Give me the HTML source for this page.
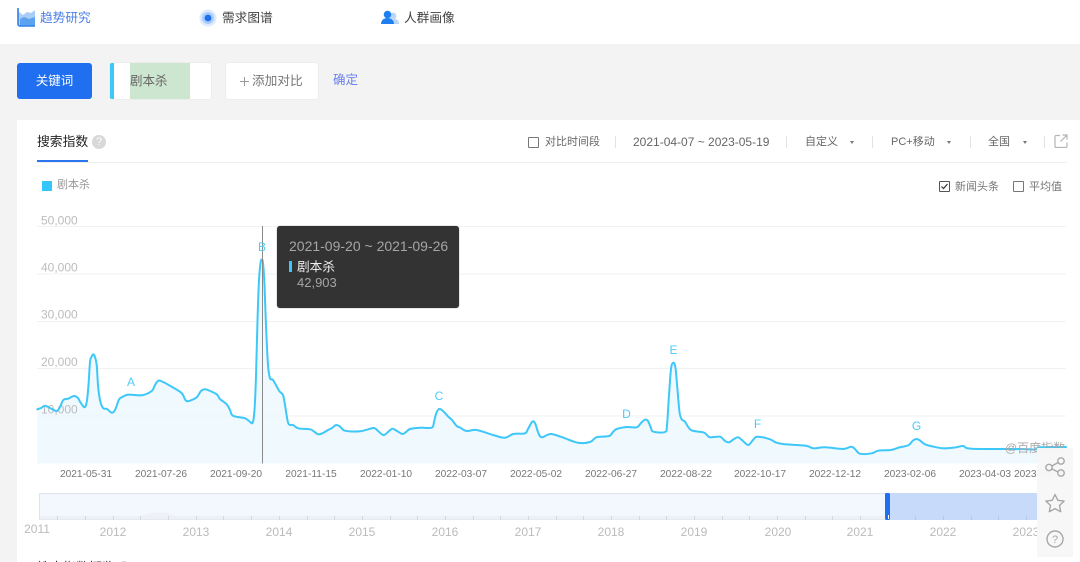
<!DOCTYPE html>
<html lang="zh"><head><meta charset="utf-8"><title>搜索指数</title>
<style>
html,body{margin:0;padding:0;background:#fff}
#p{position:relative;width:1080px;height:562px;overflow:hidden;background:#f3f3f3;font-family:"Liberation Sans","Noto Sans CJK SC",sans-serif;filter:blur(.35px)}
#p div{position:absolute;white-space:nowrap}
.t{line-height:16px;height:16px}
.sep{width:1px;height:12px;top:136px;background:#e3e3e3}
.cb{width:9px;height:9px;border:1px solid #777;background:#fff;border-radius:1px}
.arr{width:0;height:0;border-left:2px solid transparent;border-right:2px solid transparent;border-top:3px solid #777;top:141px}
.g{font-size:12px;color:#666}
</style></head><body><div id="p">
<div style="left:0;top:0;width:1080px;height:44px;background:#fff"></div>
<svg style="position:absolute;left:17px;top:7px" width="20" height="21" viewBox="0 0 20 21"><path d="M1 1v16a2 2 0 0 0 2 2h15V3l-4 3-4-1-4 3-4-3z" fill="#a9cdf6"/><path d="M3 12l4-2 5 2 6-2v9H3z" fill="#5ba2ef"/><path d="M1 1v16a2 2 0 0 0 2 2h15" fill="none" stroke="#2f80ed" stroke-width="1.6"/></svg>
<div class="t" style="left:40px;top:10px;font-size:12.7px;color:#4a7fe8">趋势研究</div>
<svg style="position:absolute;left:199px;top:9px" width="18" height="18"><circle cx="9" cy="9" r="8.5" fill="#dceafc"/><circle cx="9" cy="9" r="6" fill="#a9cdf8"/><circle cx="9" cy="9" r="3.4" fill="#1f6ff0"/></svg>
<div class="t" style="left:222px;top:10px;font-size:12.7px;color:#444">需求图谱</div>
<svg style="position:absolute;left:380px;top:9px" width="20" height="18"><circle cx="13" cy="7" r="3.4" fill="#b9d6f8"/><path d="M11 15c0-3 2-5 4-5s4 2 4 5z" fill="#b9d6f8"/><circle cx="7.5" cy="5.5" r="3.8" fill="#1f7ff0"/><path d="M1 15c0-4 3-6 6.500-6S14 11 14 15z" fill="#1f7ff0"/></svg>
<div class="t" style="left:404px;top:10px;font-size:12.7px;color:#444">人群画像</div>

<div style="left:17px;top:63px;width:75px;height:36px;background:#1f6ff0;border-radius:3px;color:#fff;font-size:12.5px;line-height:36px;text-align:center">关键词</div>
<div style="left:110px;top:63px;width:101px;height:36px;background:#fff;border-radius:2px;box-shadow:0 0 1px #ccc"></div>
<div style="left:110px;top:63px;width:4px;height:36px;background:#3ec7f9;border-radius:2px 0 0 2px"></div>
<div style="left:130px;top:63px;width:60px;height:36px;background:#cde6d0;font-size:12.5px;line-height:36px;color:#666">剧本杀</div>
<div style="left:226px;top:63px;width:92px;height:36px;background:#fff;border-radius:2px;box-shadow:0 0 1px #ccc"></div>
<svg style="position:absolute;left:240px;top:77px" width="9" height="9"><path d="M0 4.500H9M4.500 0V9" stroke="#999" stroke-width="1"/></svg>
<div style="left:252px;top:63px;height:36px;font-size:12.7px;line-height:36px;color:#777">添加对比</div>
<div class="t" style="left:333px;top:72px;font-size:12.5px;color:#6a80ee">确定</div>

<div style="left:17px;top:120px;width:1063px;height:442px;background:#fff"></div>
<div class="t" style="left:37px;top:134px;font-size:12.8px;color:#222">搜索指数</div>
<div style="left:92px;top:135px;width:14px;height:14px;border-radius:50%;background:#d8d8d8;color:#fff;font-size:11px;line-height:14px;text-align:center">?</div>
<div style="left:37px;top:162px;width:1030px;height:1px;background:#efefef"></div>
<div style="left:37px;top:160px;width:51px;height:2px;background:#2b76ef"></div>

<div class="cb" style="left:528px;top:137px"></div>
<div class="t g" style="left:545px;top:134px;font-size:11px">对比时间段</div>
<div class="sep" style="left:615px"></div>
<div class="t g" style="left:633px;top:134px">2021-04-07 ~ 2023-05-19</div>
<div class="sep" style="left:786px"></div>
<div class="t g" style="left:805px;top:134px;font-size:11px">自定义</div>
<div class="arr" style="left:850px"></div>
<div class="sep" style="left:872px"></div>
<div class="t g" style="left:891px;top:134px;font-size:11px">PC+移动</div>
<div class="arr" style="left:947px"></div>
<div class="sep" style="left:970px"></div>
<div class="t g" style="left:988px;top:134px;font-size:11px">全国</div>
<div class="arr" style="left:1023px"></div>
<div class="sep" style="left:1044px"></div>
<svg style="position:absolute;left:1054px;top:134px" width="14" height="14" fill="none" stroke="#b5b5b5" stroke-width="1.200"><path d="M6 1.500H2a1 1 0 0 0-1 1v10a1 1 0 0 0 1 1h10a1 1 0 0 0 1-1V8.500"/><path d="M6.500 7.500l6.500-6.500M8.500 1h4.500v4.500"/></svg>

<div style="left:42px;top:181px;width:10px;height:10px;background:#34c5fa"></div>
<div class="t" style="left:57px;top:177px;font-size:11px;color:#999">剧本杀</div>
<div class="cb" style="left:939px;top:181px;border-color:#555"></div>
<svg style="position:absolute;left:940px;top:182px" width="9" height="9"><path d="M1.500 4.500l2 2 4-4.500" fill="none" stroke="#333" stroke-width="1.200"/></svg>
<div class="t" style="left:955px;top:179px;font-size:11px;color:#777">新闻头条</div>
<div class="cb" style="left:1013px;top:181px"></div>
<div class="t" style="left:1029px;top:179px;font-size:11px;color:#777">平均值</div>

<svg style="position:absolute;left:0;top:0" width="1080" height="562">
<g stroke="#f2f2f2" stroke-width="1"><path d="M37 226.500H1066M37 274H1066M37 321.500H1066M37 368.500H1066M37 416H1066"/></g>
<path id="ar" fill="#e9f7fd" fill-opacity=".75" d="M37.300 409.300L41 408 45 405.700 50 408 56.700 411 60 407 63.300 400 68 398.700 74 396 78 398 80 401.700 84 407 86 405 87.300 398 88.500 385 90 362 91.500 357 93.300 354.300 95 357 96.700 365 98 385 100 400 103 408 107 409 111.700 412.700 115 410 118 402 120 398.300 128 394.700 141.700 395.300 151.700 391 155 385 158.300 380.700 162 381.500 170 385.700 180 391.700 183 395 186 400.700 190 400.700 196.700 397.300 201 391 205 389.300 209 390.500 216.700 394.300 220 399 226.700 404.300 230 410 233 415.700 245 418.300 249 421 252.700 422.700 254.500 410 256 376 257.500 320 259 280 260.500 263 261.700 259.500 263 263 264.500 285 266 325 268 365 270 378.300 273 380 279.300 391 283 395 285 405 288.300 423.300 293 425 298.300 428.300 310 429.300 314 431.500 318.300 434.300 323 433 328 430 332 428 336 425 340 426.500 345 430.700 360 431.300 373.300 428 377 430 383.300 435 388 432 392.300 428.700 397 431 402.300 434 406 432 410 429 420 427.700 431.700 427.700 434 422 436 414 439 409 443 411 448.300 416.700 452 420 456.700 426 460 427.500 466.700 431 476.700 430 493 435 505 437.700 513.300 434 525 433.300 528 429 532.300 421.700 535 423 538 432 541.700 437.300 551 434 565 438.300 572 441 580 443 590 442 594 439 597.300 437 609 436 613 432 616.700 429 626.700 427 636.700 427.300 641 423 645 419.700 648 421 651 428 653.300 431.700 665 432 667 425 669 395 671 369 673.300 362.700 675.500 368 677.500 390 679.500 412 681.700 419.300 685 421.700 691 430 703.300 432.300 707 435 710 437.300 720 436.700 725 441 729 442.300 734 439 738.300 437.300 743 441 748.300 445 753 440 757.300 436.700 770 439.300 776 442.500 785 444.300 806 445.700 813.300 448.300 825 447.300 843.300 449 851 446.700 855 449 860 453.700 871.700 453.300 878.300 450.700 890.700 450 899 447.500 908.300 445.300 913 440.500 916.700 439 920 440.500 925 444.300 933 446.500 943.300 448.300 955 447.500 963.300 446 971.700 448.700 1020 449 1035 449.500 1040 447.300 1066 447V463.500H37.300Z"/>
<g font-family="Liberation Sans,sans-serif" font-size="12" fill="#bcbcbc">
<text x="41" y="224.500">50,000</text><text x="41" y="271.500">40,000</text><text x="41" y="318.500">30,000</text><text x="41" y="366">20,000</text><text x="41" y="413.500">10,000</text></g>
<path id="ln" fill="none" stroke="#3ec7f9" stroke-width="2" stroke-linejoin="round" stroke-linecap="round" d="M37.300 409.300L41 408 45 405.700 50 408 56.700 411 60 407 63.300 400 68 398.700 74 396 78 398 80 401.700 84 407 86 405 87.300 398 88.500 385 90 362 91.500 357 93.300 354.300 95 357 96.700 365 98 385 100 400 103 408 107 409 111.700 412.700 115 410 118 402 120 398.300 128 394.700 141.700 395.300 151.700 391 155 385 158.300 380.700 162 381.500 170 385.700 180 391.700 183 395 186 400.700 190 400.700 196.700 397.300 201 391 205 389.300 209 390.500 216.700 394.300 220 399 226.700 404.300 230 410 233 415.700 245 418.300 249 421 252.700 422.700 254.500 410 256 376 257.500 320 259 280 260.500 263 261.700 259.500 263 263 264.500 285 266 325 268 365 270 378.300 273 380 279.300 391 283 395 285 405 288.300 423.300 293 425 298.300 428.300 310 429.300 314 431.500 318.300 434.300 323 433 328 430 332 428 336 425 340 426.500 345 430.700 360 431.300 373.300 428 377 430 383.300 435 388 432 392.300 428.700 397 431 402.300 434 406 432 410 429 420 427.700 431.700 427.700 434 422 436 414 439 409 443 411 448.300 416.700 452 420 456.700 426 460 427.500 466.700 431 476.700 430 493 435 505 437.700 513.300 434 525 433.300 528 429 532.300 421.700 535 423 538 432 541.700 437.300 551 434 565 438.300 572 441 580 443 590 442 594 439 597.300 437 609 436 613 432 616.700 429 626.700 427 636.700 427.300 641 423 645 419.700 648 421 651 428 653.300 431.700 665 432 667 425 669 395 671 369 673.300 362.700 675.500 368 677.500 390 679.500 412 681.700 419.300 685 421.700 691 430 703.300 432.300 707 435 710 437.300 720 436.700 725 441 729 442.300 734 439 738.300 437.300 743 441 748.300 445 753 440 757.300 436.700 770 439.300 776 442.500 785 444.300 806 445.700 813.300 448.300 825 447.300 843.300 449 851 446.700 855 449 860 453.700 871.700 453.300 878.300 450.700 890.700 450 899 447.500 908.300 445.300 913 440.500 916.700 439 920 440.500 925 444.300 933 446.500 943.300 448.300 955 447.500 963.300 446 971.700 448.700 1020 449 1035 449.500 1040 447.300 1066 447"/>
<path d="M262.500 226V463.500" stroke="#8a8a8a" stroke-width="1"/>
<g font-family="Liberation Sans,sans-serif" font-size="12" fill="#4dcbf8" text-anchor="middle">
<text x="131" y="386">A</text><text x="262" y="251">B</text><text x="439" y="400">C</text><text x="626.500" y="418">D</text><text x="673.500" y="354">E</text><text x="757.500" y="428">F</text><text x="916.500" y="430">G</text></g>
<g font-family="Liberation Sans,sans-serif" font-size="10.200" fill="#777" text-anchor="middle">
<text x="86" y="477">2021-05-31</text><text x="161" y="477">2021-07-26</text><text x="236" y="477">2021-09-20</text><text x="311" y="477">2021-11-15</text><text x="386" y="477">2022-01-10</text><text x="461" y="477">2022-03-07</text><text x="536" y="477">2022-05-02</text><text x="611" y="477">2022-06-27</text><text x="686" y="477">2022-08-22</text><text x="760" y="477">2022-10-17</text><text x="835" y="477">2022-12-12</text><text x="910" y="477">2023-02-06</text><text x="985" y="477">2023-04-03</text><text x="1040" y="477">2023-05-19</text></g>
<text x="1005" y="452" font-family="Liberation Sans,Noto Sans CJK SC,sans-serif" font-size="12" fill="#aaa">@百度指数</text>
<rect x="39.500" y="493.500" width="846" height="26" fill="#f3f7fe" stroke="#e0e3e8"/>
<path d="M100 519Q130 518 145 515 160 510 172 515 185 518 210 519Z" fill="#eef1f6"/>
<rect x="40" y="516" width="846" height="3.500" fill="#edf0f5"/>
<rect x="886" y="493" width="155" height="27" fill="#c8daf9"/>
<path stroke="#d5d8de" d="M57.500 516v4M85.500 516v4M113.500 516v4M140.500 516v4M168.500 516v4M196.500 516v4M223.500 516v4M251.500 516v4M279.500 516v4M307.500 516v4M334.500 516v4M362.500 516v4M390.500 516v4M417.500 516v4M445.500 516v4M473.500 516v4M500.500 516v4M528.500 516v4M556.500 516v4M583.500 516v4M611.500 516v4M639.500 516v4M666.500 516v4M694.500 516v4M722.500 516v4M749.500 516v4M777.500 516v4M805.500 516v4M832.500 516v4M860.500 516v4"/>
<path stroke="#b4c8ea" d="M915.500 516v4M943.500 516v4M971.500 516v4M998.500 516v4M1026.500 516v4"/>
<rect x="885" y="493" width="5" height="27" rx="1.500" fill="#1f6ff0"/><rect x="888" y="515" width="1" height="4" fill="#fff"/>
<g font-family="Liberation Sans,sans-serif" font-size="12" fill="#bbb" text-anchor="middle">
<text x="37" y="533">2011</text><text x="113" y="536">2012</text><text x="196" y="536">2013</text><text x="279" y="536">2014</text><text x="362" y="536">2015</text><text x="445" y="536">2016</text><text x="528" y="536">2017</text><text x="611" y="536">2018</text><text x="694" y="536">2019</text><text x="778" y="536">2020</text><text x="860" y="536">2021</text><text x="943" y="536">2022</text><text x="1026" y="536">2023</text></g>
<text x="37" y="572" font-family="Liberation Sans,Noto Sans CJK SC,sans-serif" font-size="13" fill="#333">搜索指数概览</text>
<circle cx="124" cy="567" r="6" fill="#d8d8d8"/>
<rect x="1037" y="448" width="36" height="109" fill="#f7f7f7" fill-opacity=".96"/>
<g fill="none" stroke="#a8a8a8" stroke-width="1.400">
<circle cx="1061" cy="461" r="3.200"/><circle cx="1049" cy="467.500" r="3.200"/><circle cx="1061" cy="473" r="3.200"/><path d="M1052 466l6-3.500M1052 469l6 3"/>
<path d="M1055 494.500l2.800 5.800 6.300.8-4.600 4.300 1.200 6.300-5.700-3.100-5.700 3.100 1.200-6.300-4.600-4.300 6.300-.8z" stroke-linejoin="round"/>
<circle cx="1055" cy="539" r="8"/></g>
<text x="1055" y="543" text-anchor="middle" font-family="Liberation Sans,sans-serif" font-size="11" fill="#a8a8a8">?</text>
</svg>

<div style="left:277px;top:226px;width:182px;height:82px;background:#333;border-radius:3px;box-shadow:0 0 1px #666"></div>
<div class="t" style="left:289px;top:238px;font-size:14px;color:#a5a5a5">2021-09-20 ~ 2021-09-26</div>
<div style="left:289px;top:261px;width:3px;height:11px;background:#3ec7f9"></div>
<div class="t" style="left:297px;top:259px;font-size:12.7px;color:#eee">剧本杀</div>
<div class="t" style="left:297px;top:275px;font-size:13px;color:#a5a5a5">42,903</div>
</div>
<script>
(function(){
var l=document.getElementById('ln'),a=document.getElementById('ar');
var n=l.getAttribute('d').replace(/[ML]/g,' ').trim().split(/\s+/).map(Number),p=[];
for(var i=0;i<n.length;i+=2)p.push([n[i],n[i+1]]);
var d='M'+p[0][0]+' '+p[0][1],k=1/6;
for(i=0;i<p.length-1;i++){
var a0=p[Math.max(i-1,0)],b=p[i],c=p[i+1],e=p[Math.min(i+2,p.length-1)];
d+='C'+(b[0]+(c[0]-a0[0])*k).toFixed(1)+' '+(b[1]+(c[1]-a0[1])*k).toFixed(1)+' '+(c[0]-(e[0]-b[0])*k).toFixed(1)+' '+(c[1]-(e[1]-b[1])*k).toFixed(1)+' '+c[0]+' '+c[1];
}
l.setAttribute('d',d);
a.setAttribute('d',d+'V463.5H37.3Z');
})();
</script>
</body></html>
